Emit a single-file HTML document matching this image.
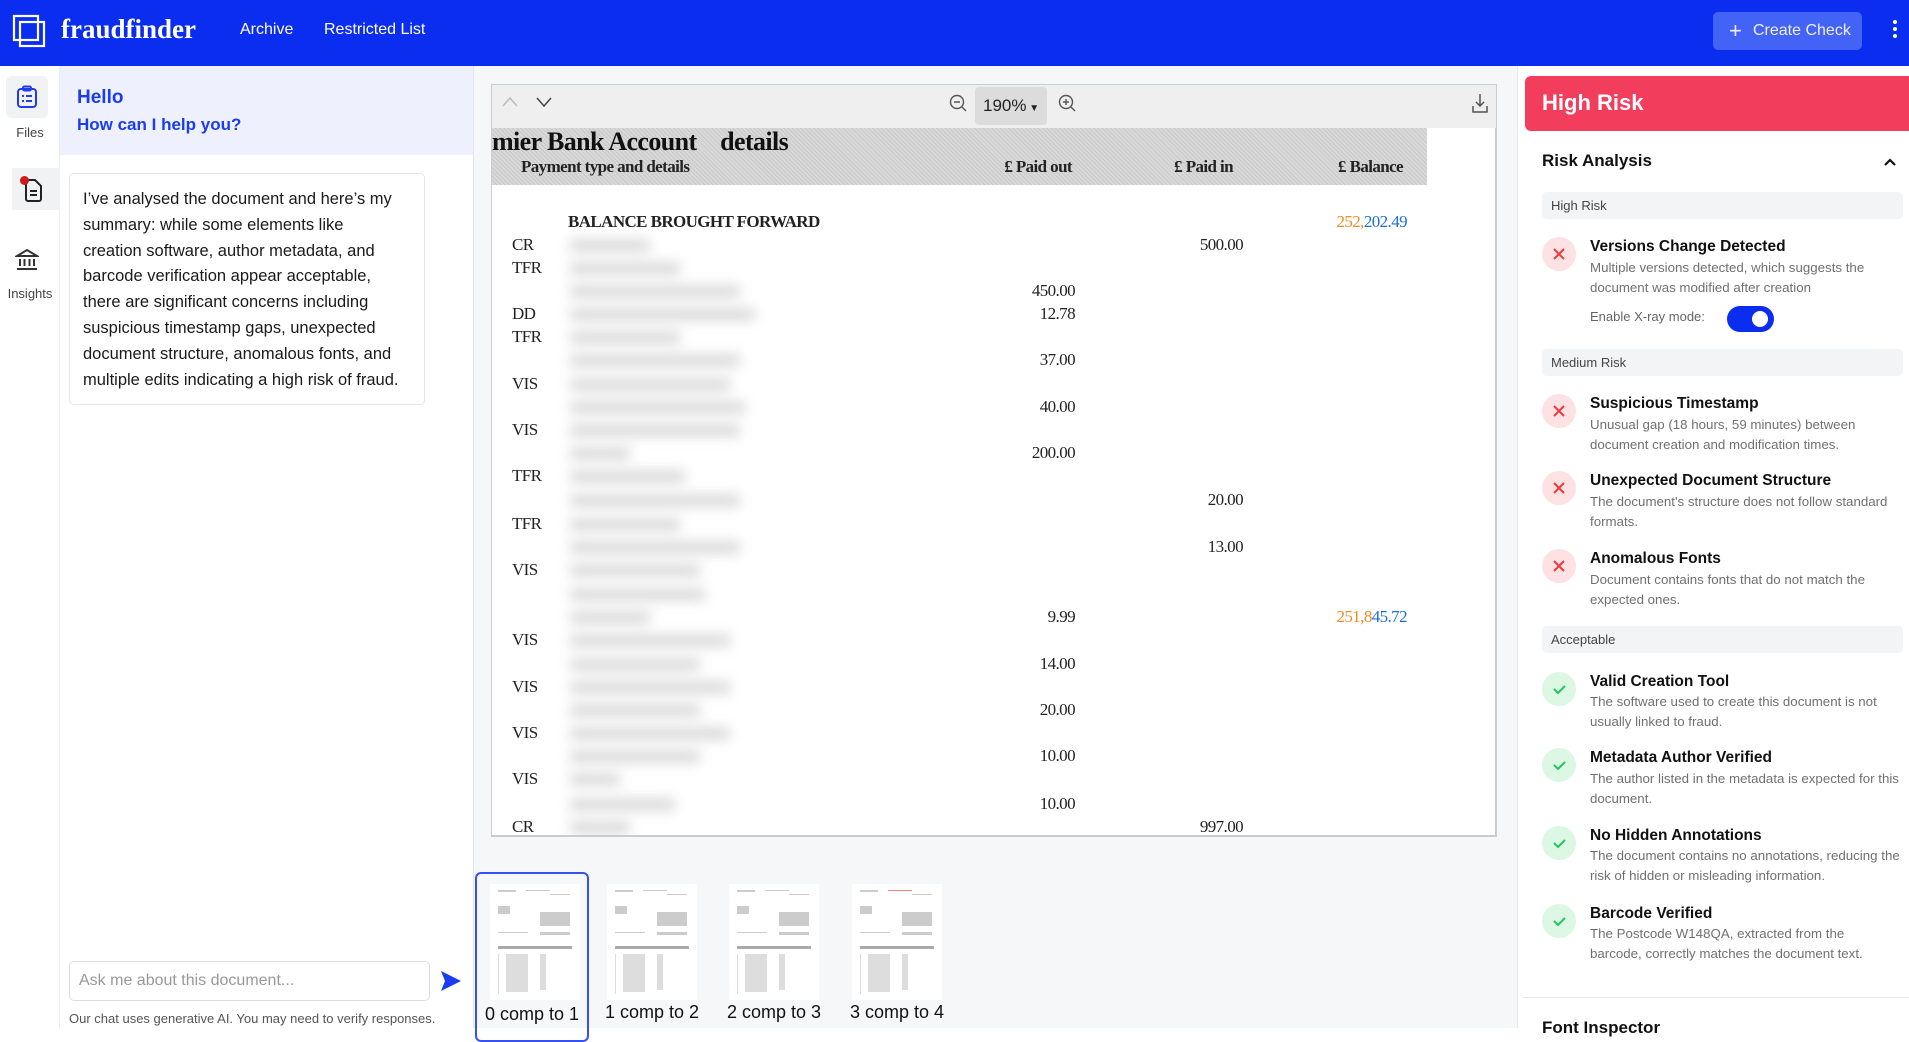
<!DOCTYPE html>
<html><head><meta charset="utf-8"><style>
*{box-sizing:border-box;margin:0;padding:0}
body{width:1909px;height:1028px;overflow:hidden;position:relative;font-family:"Liberation Sans",sans-serif;background:#fff;color:#111}
.a{position:absolute}
.hdr{left:0;top:0;width:1909px;height:66px;background:#0b2df0}
.nav{color:#fff;font-size:16px;top:21px}
.side{left:0;top:66px;width:60px;height:962px;background:#fff;border-right:1px solid #eceef2}
.slab{font-size:13px;color:#444;width:60px;text-align:center}
.chat{left:60px;top:66px;width:414px;height:962px;background:#fff;border-right:1px solid #e3e5ea}
.mid{left:474px;top:66px;width:1043px;height:962px;background:#f6f7f9}
.doc{left:491px;top:128px;width:1006px;height:709px;overflow:hidden;background:#fff;border-left:1px solid #ccc;border-right:2px solid #ccc;border-bottom:2px solid #ccc}
.s{position:absolute;font-family:"Liberation Serif",serif;font-size:17px;line-height:20px;color:#222;letter-spacing:-0.6px}
.b{position:absolute;left:78px;height:13px;background:#9a9a9a;filter:blur(6px);opacity:.35}
.right{left:1517px;top:66px;width:392px;height:962px;background:#fff;border-left:1px solid #e6e8ec}
.lab{left:1542px;width:361px;height:27px;background:#f3f4f5;border-radius:5px;font-size:13px;color:#444;padding:6px 9px}
.ic{left:1542px;width:34px;height:34px;border-radius:50%}
.ic.r{background:#fde1e3}.ic.g{background:#dcf7e4}
.tt{left:1590px;font-size:15.5px;font-weight:bold;color:#111}
.dd{left:1590px;font-size:13.3px;color:#707070;line-height:19.5px;width:312px}
</style></head><body>
<div class="a hdr"></div>
<svg class="a" style="left:12px;top:14px" width="34" height="34" viewBox="0 0 34 34" fill="none" stroke="#fff" stroke-width="2.2"><rect x="2" y="2" width="24" height="24"/><rect x="8" y="8" width="24" height="24"/></svg>
<div class="a" style="left:61px;top:14px;color:#fff;font:bold 27px 'Liberation Serif',serif">fraudfinder</div>
<div class="a nav" style="left:240px">Archive</div>
<div class="a nav" style="left:324px">Restricted List</div>
<div class="a" style="left:1713px;top:12px;width:149px;height:38px;background:#4363f7;border-radius:5px;color:#eef;font-size:16px;padding:10px 0 0 40px">Create Check</div>
<div class="a" style="left:1729px;top:21px;color:#eef;font-size:22px;line-height:20px">+</div>
<div class="a" style="left:1893px;top:20px;width:4px;height:4px;background:#fff;border-radius:2px;box-shadow:0 7px #fff,0 14px #fff"></div>

<div class="a side"></div>
<div class="a" style="left:6px;top:76px;width:42px;height:42px;background:#f1f2f4;border-radius:6px"></div>
<svg class="a" style="left:16px;top:85px" width="22" height="24" viewBox="0 0 22 24" fill="none" stroke="#1f3df0" stroke-width="2"><rect x="2" y="4" width="18" height="18" rx="3"/><rect x="7" y="1.5" width="8" height="4" rx="1.5"/><path d="M6 11h2M10 11h6M6 16h2M10 16h6"/></svg>
<div class="a slab" style="top:125px">Files</div>
<div class="a" style="left:12px;top:168px;width:48px;height:42px;background:#f1f2f4"></div>
<svg class="a" style="left:22px;top:177px" width="22" height="26" viewBox="0 0 22 26" fill="none" stroke="#222" stroke-width="2"><path d="M4 3h9l6 6v13a2 2 0 0 1-2 2H6a2 2 0 0 1-2-2z"/><path d="M8 14h7M8 18h7"/></svg>
<div class="a" style="left:20px;top:176px;width:9px;height:9px;border-radius:50%;background:#d01818"></div>
<svg class="a" style="left:15px;top:248px" width="24" height="23" viewBox="0 0 24 23" fill="none" stroke="#333" stroke-width="2"><path d="M2 8L12 2l10 6z"/><path d="M3 8h18M5 11v7M9.5 11v7M14.5 11v7M19 11v7M2 21h20"/></svg>
<div class="a slab" style="top:286px">Insights</div>

<div class="a chat"></div>
<div class="a" style="left:60px;top:66px;width:413px;height:89px;background:#eef1fd"></div>
<div class="a" style="left:77px;top:87px;color:#1a3cf0;font-size:19px;font-weight:bold">Hello</div>
<div class="a" style="left:77px;top:115px;color:#1a3cf0;font-size:17px;font-weight:bold">How can I help you?</div>
<div class="a" style="left:69px;top:173px;width:356px;height:232px;border:1px solid #e5e6ea;border-radius:5px;padding:13px 0 0 13px;font-size:16.5px;line-height:25.8px;color:#1a1a1a">I’ve analysed the document and here’s my<br>summary: while some elements like<br>creation software, author metadata, and<br>barcode verification appear acceptable,<br>there are significant concerns including<br>suspicious timestamp gaps, unexpected<br>document structure, anomalous fonts, and<br>multiple edits indicating a high risk of fraud.</div>
<div class="a" style="left:69px;top:961px;width:361px;height:40px;border:1px solid #dcdde1;border-radius:5px;padding:10px 9px;font-size:16px;color:#999">Ask me about this document...</div>
<svg class="a" style="left:440px;top:970px" width="22" height="22" viewBox="0 0 22 22"><path d="M1 1L21 11 1 21 5 11z" fill="#1a3cf0"/></svg>
<div class="a" style="left:69px;top:1011px;font-size:13px;color:#555">Our chat uses generative AI. You may need to verify responses.</div>

<div class="a mid"></div>
<div class="a" style="left:491px;top:84px;width:1006px;height:44px;background:#efefef;border:1px solid #ccc;border-bottom:none"></div>
<svg class="a" style="left:501px;top:95px" width="60" height="14" viewBox="0 0 60 14" fill="none" stroke-width="1.5"><path d="M2 11l7-8 7 8" stroke="#bbb"/><path d="M36 3l7 8 7-8" stroke="#444"/></svg>
<svg class="a" style="left:948px;top:93px" width="20" height="20" viewBox="0 0 20 20" fill="none" stroke="#555" stroke-width="1.4"><circle cx="9" cy="9" r="6.5"/><path d="M6 9h6M14 14l4 4"/></svg>
<div class="a" style="left:975px;top:87px;width:72px;height:38px;background:#dcdcdc;border-radius:4px;font-size:17px;color:#222;padding:9px 0 0 8px">190%<span style="font-size:10px"> ▼</span></div>
<svg class="a" style="left:1057px;top:93px" width="20" height="20" viewBox="0 0 20 20" fill="none" stroke="#555" stroke-width="1.4"><circle cx="9" cy="9" r="6.5"/><path d="M6 9h6M9 6v6M14 14l4 4"/></svg>
<svg class="a" style="left:1471px;top:92px" width="18" height="22" viewBox="0 0 18 22" fill="none" stroke="#555" stroke-width="1.5"><path d="M9 2v12M5 10l4 4 4-4M2 14v6h14v-6"/></svg>

<div class="a doc">
<div style="position:absolute;left:0;top:0;width:935px;height:57px;background:#d9d9d9;background-image:repeating-linear-gradient(45deg,#c8c8c8 0 1px,transparent 1px 3px)"></div>
<div class="s" style="left:0;top:0;font-size:26px;line-height:28px;font-weight:bold;color:#111">mier Bank Account&nbsp;&nbsp;&nbsp; details</div>
<div class="s" style="left:29px;top:29px;font-weight:bold">Payment type and details</div>
<div class="s" style="right:423px;top:29px;font-weight:bold">£ Paid out</div>
<div class="s" style="right:262px;top:29px;font-weight:bold">£ Paid in</div>
<div class="s" style="right:92px;top:29px;font-weight:bold">£ Balance</div>

<div class="s" style="left:76px;top:84px;font-weight:bold">BALANCE BROUGHT FORWARD</div>
<div class="s" style="right:88px;top:84px;color:#f08a24">252,<span style="color:#1a6fd8">202.49</span></div>

<div class="s" style="left:20px;top:107px">CR</div><div class="s" style="right:252px;top:107px">500.00</div>
<div class="s" style="left:20px;top:130px">TFR</div>
<div class="s" style="right:420px;top:153px">450.00</div>
<div class="s" style="left:20px;top:176px">DD</div><div class="s" style="right:420px;top:176px">12.78</div>
<div class="s" style="left:20px;top:199px">TFR</div>
<div class="s" style="right:420px;top:222px">37.00</div>
<div class="s" style="left:20px;top:246px">VIS</div>
<div class="s" style="right:420px;top:269px">40.00</div>
<div class="s" style="left:20px;top:292px">VIS</div>
<div class="s" style="right:420px;top:315px">200.00</div>
<div class="s" style="left:20px;top:338px">TFR</div>
<div class="s" style="right:252px;top:362px">20.00</div>
<div class="s" style="left:20px;top:386px">TFR</div>
<div class="s" style="right:252px;top:409px">13.00</div>
<div class="s" style="left:20px;top:432px">VIS</div>
<div class="s" style="right:420px;top:479px">9.99</div>
<div class="s" style="right:88px;top:479px;color:#f08a24">251,8<span style="color:#1a6fd8">45.72</span></div>
<div class="s" style="left:20px;top:502px">VIS</div>
<div class="s" style="right:420px;top:526px">14.00</div>
<div class="s" style="left:20px;top:549px">VIS</div>
<div class="s" style="right:420px;top:572px">20.00</div>
<div class="s" style="left:20px;top:595px">VIS</div>
<div class="s" style="right:420px;top:618px">10.00</div>
<div class="s" style="left:20px;top:641px">VIS</div>
<div class="s" style="right:420px;top:666px">10.00</div>
<div class="s" style="left:20px;top:689px">CR</div><div class="s" style="right:252px;top:689px">997.00</div>

<div class="b" style="top:111px;width:80px"></div>
<div class="b" style="top:134px;width:110px"></div>
<div class="b" style="top:157px;width:170px"></div>
<div class="b" style="top:180px;width:185px"></div>
<div class="b" style="top:203px;width:110px"></div>
<div class="b" style="top:226px;width:170px"></div>
<div class="b" style="top:250px;width:160px"></div>
<div class="b" style="top:273px;width:175px"></div>
<div class="b" style="top:296px;width:170px"></div>
<div class="b" style="top:319px;width:60px"></div>
<div class="b" style="top:342px;width:115px"></div>
<div class="b" style="top:366px;width:170px"></div>
<div class="b" style="top:390px;width:110px"></div>
<div class="b" style="top:413px;width:170px"></div>
<div class="b" style="top:436px;width:130px"></div>
<div class="b" style="top:460px;width:135px"></div>
<div class="b" style="top:483px;width:80px"></div>
<div class="b" style="top:506px;width:160px"></div>
<div class="b" style="top:530px;width:130px"></div>
<div class="b" style="top:553px;width:160px"></div>
<div class="b" style="top:576px;width:130px"></div>
<div class="b" style="top:599px;width:160px"></div>
<div class="b" style="top:622px;width:130px"></div>
<div class="b" style="top:645px;width:50px"></div>
<div class="b" style="top:670px;width:105px"></div>
<div class="b" style="top:693px;width:60px"></div>
</div>

<div class="a" style="left:475px;top:872px;width:114px;height:170px;border:2px solid #3550f5;border-radius:6px"></div>
<svg class="a" style="left:490px;top:884px" width="90" height="116" viewBox="0 0 90 116"><rect width="90" height="116" fill="#fff"/><g fill="#ccc"><rect x="8" y="6" width="18" height="2"/><rect x="36" y="6" width="24" height="1"/><rect x="60" y="10" width="20" height="1"/><rect x="8" y="22" width="12" height="8"/><rect x="50" y="28" width="30" height="14"/><rect x="8" y="48" width="30" height="1"/><rect x="50" y="48" width="30" height="3"/><rect x="8" y="62" width="74" height="3" fill="#aaa"/></g><g fill="#ddd"><rect x="8" y="70" width="1" height="40"/><rect x="16" y="70" width="22" height="38"/><rect x="50" y="70" width="6" height="36"/></g></svg>
<svg class="a" style="left:607px;top:884px" width="90" height="116" viewBox="0 0 90 116"><rect width="90" height="116" fill="#fff"/><g fill="#ccc"><rect x="8" y="6" width="18" height="2"/><rect x="36" y="6" width="24" height="1"/><rect x="60" y="10" width="20" height="1"/><rect x="8" y="22" width="12" height="8"/><rect x="50" y="28" width="30" height="14"/><rect x="8" y="48" width="30" height="1"/><rect x="50" y="48" width="30" height="3"/><rect x="8" y="62" width="74" height="3" fill="#aaa"/></g><g fill="#ddd"><rect x="8" y="70" width="1" height="40"/><rect x="16" y="70" width="22" height="38"/><rect x="50" y="70" width="6" height="36"/></g></svg>
<svg class="a" style="left:729px;top:884px" width="90" height="116" viewBox="0 0 90 116"><rect width="90" height="116" fill="#fff"/><g fill="#ccc"><rect x="8" y="6" width="18" height="2"/><rect x="36" y="6" width="24" height="1"/><rect x="60" y="10" width="20" height="1"/><rect x="8" y="22" width="12" height="8"/><rect x="50" y="28" width="30" height="14"/><rect x="8" y="48" width="30" height="1"/><rect x="50" y="48" width="30" height="3"/><rect x="8" y="62" width="74" height="3" fill="#aaa"/></g><g fill="#ddd"><rect x="8" y="70" width="1" height="40"/><rect x="16" y="70" width="22" height="38"/><rect x="50" y="70" width="6" height="36"/></g></svg>
<svg class="a" style="left:852px;top:884px" width="90" height="116" viewBox="0 0 90 116"><rect width="90" height="116" fill="#fff"/><g fill="#ccc"><rect x="8" y="6" width="18" height="2"/><rect x="36" y="6" width="24" height="1" fill="#f08080"/><rect x="60" y="10" width="20" height="1"/><rect x="8" y="22" width="12" height="8"/><rect x="50" y="28" width="30" height="14"/><rect x="8" y="48" width="30" height="1"/><rect x="50" y="48" width="30" height="3"/><rect x="8" y="62" width="74" height="3" fill="#aaa"/></g><g fill="#ddd"><rect x="8" y="70" width="1" height="40"/><rect x="16" y="70" width="22" height="38"/><rect x="50" y="70" width="6" height="36"/></g></svg>
<div class="a" style="left:475px;top:1004px;width:114px;text-align:center;font-size:18px;color:#111">0 comp to 1</div>
<div class="a" style="left:597px;top:1002px;width:110px;text-align:center;font-size:18px;color:#111">1 comp to 2</div>
<div class="a" style="left:719px;top:1002px;width:110px;text-align:center;font-size:18px;color:#111">2 comp to 3</div>
<div class="a" style="left:842px;top:1002px;width:110px;text-align:center;font-size:18px;color:#111">3 comp to 4</div>

<div class="a right"></div>
<div class="a" style="left:1525px;top:76px;width:390px;height:55px;background:#f23d5c;border-radius:6px;color:#fff;font-size:22px;font-weight:bold;padding:14px 0 0 17px">High Risk</div>
<div class="a" style="left:1542px;top:151px;font-size:17px;font-weight:bold;color:#111">Risk Analysis</div>
<svg class="a" style="left:1883px;top:157px" width="14" height="10" viewBox="0 0 14 10" fill="none" stroke="#111" stroke-width="2.2"><path d="M2 8l5-5 5 5"/></svg>

<div class="a lab" style="top:192px">High Risk</div>
<div class="a ic r" style="top:237px"></div>
<div class="a tt" style="top:238px">Versions Change Detected</div>
<div class="a dd" style="top:258px">Multiple versions detected, which suggests the document was modified after creation</div>
<div class="a" style="left:1590px;top:309px;font-size:13px;color:#666">Enable X-ray mode:</div>
<div class="a" style="left:1727px;top:306px;width:47px;height:26px;border-radius:13px;background:#0b2df0"></div>
<div class="a" style="left:1752px;top:311px;width:16px;height:16px;border-radius:50%;background:#fff"></div>

<div class="a lab" style="top:349px">Medium Risk</div>
<div class="a ic r" style="top:394px"></div>
<div class="a tt" style="top:395px">Suspicious Timestamp</div>
<div class="a dd" style="top:415px">Unusual gap (18 hours, 59 minutes) between document creation and modification times.</div>
<div class="a ic r" style="top:471px"></div>
<div class="a tt" style="top:472px">Unexpected Document Structure</div>
<div class="a dd" style="top:492px">The document's structure does not follow standard formats.</div>
<div class="a ic r" style="top:549px"></div>
<div class="a tt" style="top:550px">Anomalous Fonts</div>
<div class="a dd" style="top:570px">Document contains fonts that do not match the expected ones.</div>

<div class="a lab" style="top:626px">Acceptable</div>
<div class="a ic g" style="top:672px"></div>
<div class="a tt" style="top:673px">Valid Creation Tool</div>
<div class="a dd" style="top:692px">The software used to create this document is not usually linked to fraud.</div>
<div class="a ic g" style="top:748px"></div>
<div class="a tt" style="top:749px">Metadata Author Verified</div>
<div class="a dd" style="top:769px">The author listed in the metadata is expected for this document.</div>
<div class="a ic g" style="top:826px"></div>
<div class="a tt" style="top:827px">No Hidden Annotations</div>
<div class="a dd" style="top:846px">The document contains no annotations, reducing the risk of hidden or misleading information.</div>
<div class="a ic g" style="top:904px"></div>
<div class="a tt" style="top:905px">Barcode Verified</div>
<div class="a dd" style="top:924px">The Postcode W148QA, extracted from the<br>barcode, correctly matches the document text.</div>

<svg class="a" style="left:1542px;top:237px" width="34" height="720" viewBox="0 0 34 720" fill="none" stroke-width="2">
<g stroke="#ef3b3b"><path d="M12 12l10 10M22 12l-10 10"/><path d="M12 169l10 10M22 169l-10 10"/><path d="M12 246l10 10M22 246l-10 10"/><path d="M12 324l10 10M22 324l-10 10"/></g>
<g stroke="#22c55e"><path d="M12 452l4 4 7-7"/><path d="M12 528l4 4 7-7"/><path d="M12 606l4 4 7-7"/><path d="M12 684l4 4 7-7"/></g></svg>
<div class="a" style="left:1523px;top:997px;width:386px;height:1px;background:#e6e8ec"></div>
<div class="a" style="left:1542px;top:1018px;font-size:17px;font-weight:bold;color:#111">Font Inspector</div>
</body></html>
